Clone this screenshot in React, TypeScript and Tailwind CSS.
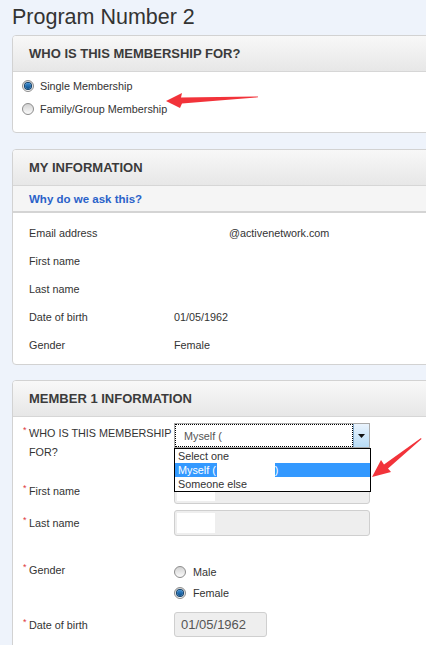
import React from 'react'

const font = { fontFamily: '"Liberation Sans", Arial, sans-serif' }

function Radio({ checked }: { checked?: boolean }) {
  return (
    <span className="flex h-[12px] w-[12px] flex-shrink-0 items-center justify-center rounded-full border border-[#8c8c8c] bg-gradient-to-b from-[#d2d2d2] to-[#fbfbfb]">
      {checked && <span className="h-[6px] w-[6px] rounded-full bg-gradient-to-b from-[#3c8fd6] to-[#0b4f8a] ring-1 ring-[#0d3f6b]" />}
    </span>
  )
}

function CardHeader({ title }: { title: string }) {
  return (
    <div className="flex h-[36px] items-center border-b border-[#d6d6d6] bg-gradient-to-b from-[#f8f8f8] to-[#e7e7e7] pl-4">
      <h2 className="text-[13px] font-bold leading-[16px] text-[#3b3b3b]">{title}</h2>
    </div>
  )
}

function Card({ children }: { children: React.ReactNode }) {
  return (
    <div className="w-[440px] overflow-hidden rounded-[4px] border border-[#d2d2d2] bg-white">{children}</div>
  )
}

function Req({ children }: { children: React.ReactNode }) {
  return (
    <span className="relative">
      <span className="absolute -left-[6px] -top-[3px] text-[9px] leading-[12px] text-[#e0383e]">*</span>
      {children}
    </span>
  )
}

export default function App() {
  const info = [
    { label: 'Email address', value: '@activenetwork.com', indent: true },
    { label: 'First name', value: '' },
    { label: 'Last name', value: '' },
    { label: 'Date of birth', value: '01/05/1962' },
    { label: 'Gender', value: 'Female' },
  ]

  return (
    <div className="relative h-[645px] w-[426px] overflow-hidden bg-[#eef3fb] pl-3 text-[10.8px] leading-[14px] text-[#333]" style={font}>
      <h1 className="pt-[2px] text-[21.5px] leading-[30px] text-[#333]">Program Number 2</h1>

      {/* Who is this membership for */}
      <div className="mt-[3px]">
        <Card>
          <CardHeader title="WHO IS THIS MEMBERSHIP FOR?" />
          <div className="flex flex-col pb-[12px] pl-[9px] pt-[2px]">
            <label className="flex h-[23px] items-center gap-[6px]">
              <Radio checked />
              <span>Single Membership</span>
            </label>
            <label className="flex h-[23px] items-center gap-[6px]">
              <Radio />
              <span>Family/Group Membership</span>
            </label>
          </div>
        </Card>
      </div>

      {/* My information */}
      <div className="mt-[16px]">
        <Card>
          <CardHeader title="MY INFORMATION" />
          <div className="flex h-[27px] items-center border-b-2 border-[#d4d4d4] bg-[#f5f5f5] pl-4">
            <span className="text-[11.5px] font-bold text-[#2a62c9]">Why do we ask this?</span>
          </div>
          <div className="flex flex-col pb-[5px] pl-4 pt-[6px]">
            {info.map(row => (
              <div key={row.label} className="flex h-[28px] items-center">
                <span className="w-[145px]">{row.label}</span>
                <span className={row.indent ? 'pl-[55px]' : ''}>{row.value}</span>
              </div>
            ))}
          </div>
        </Card>
      </div>

      {/* Member 1 information */}
      <div className="mt-[15px]">
        <Card>
          <CardHeader title="MEMBER 1 INFORMATION" />
          <div className="flex flex-col pl-4 pt-[6px]">
            <div className="flex h-[55px]">
              <div className="w-[145px] whitespace-nowrap pt-[1px] leading-[19px]">
                <Req>WHO IS THIS MEMBERSHIP</Req>
                <br />
                FOR?
              </div>
              <div className="relative">
                <div className="flex h-[25px] w-[196px] items-center border border-[#aaa] bg-white">
                  <div className="flex h-full flex-1 items-center border border-dotted border-black pl-[8px] text-[#555]">
                    Myself (
                  </div>
                  <div className="flex h-[23px] w-[16px] items-center justify-center border-l border-[#7ea6c9] bg-gradient-to-b from-[#e9f3fd] to-[#b8dcf6]">
                    <svg width="7" height="4" viewBox="0 0 7 4">
                      <path d="M0 0h7L3.5 4z" fill="#111" />
                    </svg>
                  </div>
                </div>
                {/* open dropdown list */}
                <div className="absolute left-0 top-[25px] z-10 w-[197px] border border-black bg-white text-[10.8px] leading-[14px] text-[#333]">
                  <div className="pl-[3px]">Select one</div>
                  <div className="flex bg-[#3399ff] pl-[3px] text-white">
                    <span>Myself (</span>
                    <span className="ml-[1px] h-[14px] w-[58px] bg-white" />
                    <span>)</span>
                  </div>
                  <div className="pl-[3px]">Someone else</div>
                </div>
              </div>
            </div>

            <div className="flex h-[26px] items-center">
              <span className="w-[145px]">
                <Req>First name</Req>
              </span>
              <div className="flex h-[26px] w-[196px] items-center rounded-[3px] border border-[#cfcfcf] bg-[#eeeeee] pl-[2px]">
                <span className="h-[20px] w-[38px] bg-white" />
              </div>
            </div>

            <div className="mt-[6px] flex h-[26px] items-center">
              <span className="w-[145px]">
                <Req>Last name</Req>
              </span>
              <div className="flex h-[26px] w-[196px] items-center rounded-[3px] border border-[#cfcfcf] bg-[#eeeeee] pl-[2px]">
                <span className="h-[20px] w-[38px] bg-white" />
              </div>
            </div>

            <div className="mt-[25px] flex">
              <span className="w-[145px] leading-[18px]">
                <Req>Gender</Req>
              </span>
              <div className="flex flex-col">
                <label className="flex h-[21px] items-center gap-[7px]">
                  <Radio />
                  <span>Male</span>
                </label>
                <label className="flex h-[21px] items-center gap-[7px]">
                  <Radio checked />
                  <span>Female</span>
                </label>
              </div>
            </div>

            <div className="mt-[9px] flex items-center">
              <span className="w-[145px]">
                <Req>Date of birth</Req>
              </span>
              <div className="flex h-[25px] w-[93px] items-center rounded-[3px] border border-[#cfcfcf] bg-[#eeeeee] pl-[6px] text-[13px] text-[#555]">
                01/05/1962
              </div>
            </div>
            <div className="h-[20px]" />
          </div>
        </Card>
      </div>

      {/* annotation arrows */}
      <svg className="pointer-events-none absolute left-0 top-0 z-20" width="426" height="645" viewBox="0 0 426 645">
        <polygon points="166,101 182,93 181,97.5 258,96.5 258,97.3 182,103.5 180,108" fill="#f2333a" />
        <polygon points="372,477 381,460 384,464.5 421,438 421.5,439 388,468.5 391,472" fill="#f2333a" />
      </svg>
    </div>
  )
}
